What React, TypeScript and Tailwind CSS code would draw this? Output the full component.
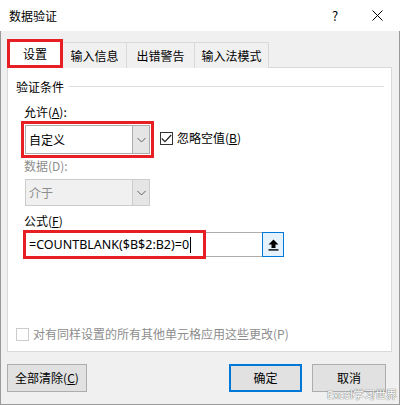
import React from "react";

const font = "font-['Microsoft_YaHei','Noto_Sans_CJK_SC',sans-serif]";

const Chevron: React.FC<{ color?: string }> = ({ color = "#606060" }) => (
  <svg width="9" height="6" viewBox="0 0 9 6" fill="none">
    <path d="M0.5 1 L4.5 5 L8.5 1" stroke={color} strokeWidth="1" />
  </svg>
);

const App: React.FC = () => {
  const tabs = ["输入信息", "出错警告", "输入法模式"];
  const tabWidths = ["w-[65px]", "w-[69px]", "w-[75px]"];

  return (
    <div className={`w-[400px] h-[405px] bg-white text-[12px] leading-4 text-[#000] ${font}`}>
      {/* Title bar */}
      <div className="h-[31px] flex items-center pl-[9px] bg-white">
        <span className="text-[12px]">数据验证</span>
        <span className="ml-auto w-[20px] text-center text-[13px] mr-[27px]">?</span>
        <svg width="11" height="11" viewBox="0 0 11 11" className="mr-[17px]">
          <path d="M0.5 0.5 L10.5 10.5 M10.5 0.5 L0.5 10.5" stroke="#000" strokeWidth="1" />
        </svg>
      </div>

      {/* Body */}
      <div className="relative h-[374px] bg-[#f0f0f0] border-x border-b border-[#9a9a9a] px-[6px] pt-[9px]">
        {/* Tabs */}
        <div className="flex items-end h-[28px] relative z-10">
          <div className="relative w-[56px] h-[29px] bg-white flex items-center justify-center">
            <span>设置</span>
            <div className="absolute inset-0 border-[3px] border-[#e81e25]" />
          </div>
          {tabs.map((t, i) => (
            <div
              key={t}
              className={`${tabWidths[i]} h-[26px] border border-b-0 border-[#d9d9d9] -ml-px flex items-center justify-center bg-[#f0f0f0]`}
            >
              {t}
            </div>
          ))}
        </div>

        {/* Panel */}
        <div className="relative w-[385px] h-[285px] -mt-px bg-white border border-[#d9d9d9]">
          <div className="flex items-center pl-[8px] pt-[11px]">
            <span>验证条件</span>
            <div className="flex-1 h-px bg-[#dcdcdc] ml-[5px] mr-[7px] mt-[-2px]" />
          </div>

          <div className="pl-[16px] mt-[9px]">
            允许(<span className="underline">A</span>):
          </div>

          <div className="flex items-start pl-[17px] mt-[5px]">
            <div className="relative w-[125px] h-[29px] border border-[#acacac] bg-white flex">
              <span className="flex-1 pl-[3px] flex items-center text-[12px]">自定义</span>
              <div className="w-[17px] h-full bg-[#e5e5e5] border-l border-[#acacac] flex items-center justify-center">
                <Chevron />
              </div>
              <div className="absolute -left-[5px] -top-[5px] -right-[5px] -bottom-[5px] border-[3px] border-[#e81e25]" />
            </div>
            <div className="flex items-center ml-[10px] mt-[5px]">
              <div className="w-[13px] h-[13px] border border-[#333] bg-white flex items-center justify-center">
                <svg width="11" height="9" viewBox="0 0 11 9">
                  <path d="M0.8 4.5 L4 7.6 L10.2 1" stroke="#222" strokeWidth="1.2" fill="none" />
                </svg>
              </div>
              <span className="ml-[4px]">
                忽略空值(<span className="underline">B</span>)
              </span>
            </div>
          </div>

          <div className="pl-[16px] mt-[4px] text-[#8d8d8d]">数据(D):</div>

          <div className="ml-[17px] mt-[5px] w-[125px] h-[27px] border border-[#cccccc] bg-[#f0f0f0] flex">
            <span className="flex-1 pl-[3px] flex items-center text-[#8d8d8d]">介于</span>
            <div className="w-[17px] h-full bg-[#e5e5e5] border-l border-[#cccccc] flex items-center justify-center">
              <Chevron />
            </div>
          </div>

          <div className="pl-[16px] mt-[7px]">
            公式(<span className="underline">F</span>)
          </div>

          <div className="relative ml-[17px] mt-[3px] w-[259px] h-[25px] border border-[#acacac] bg-white flex">
            <div className="flex-1 flex items-center pl-[3px] text-[12.5px] font-['Noto_Sans',sans-serif]">
              =COUNTBLANK($B$2:B2)=0
              <span className="inline-block w-px h-[16px] bg-black ml-px" />
            </div>
            <div className="w-[22px] h-[25px] -mt-px -mr-px border border-[#0078d7] bg-[#e5f1fb] flex items-center justify-center">
              <svg width="11" height="12" viewBox="0 0 11 12">
                <path d="M5.5 0.5 L10.5 5.5 H7.5 V9 H3.5 V5.5 H0.5 Z" fill="#000" />
                <rect x="0.5" y="10.2" width="10" height="1.4" fill="#000" />
              </svg>
            </div>
            <div className="absolute -left-[3px] -top-[3px] -bottom-[3px] w-[183px] border-[3px] border-[#e81e25]" />
          </div>

          <div className="flex items-center pl-[8px] mt-[69px]">
            <div className="w-[13px] h-[13px] border border-[#cccccc] bg-white" />
            <span className="ml-[4px] text-[#8d8d8d]">对有同样设置的所有其他单元格应用这些更改(P)</span>
          </div>
        </div>

        {/* Buttons */}
        <div className="flex items-center mt-[12px]">
          <div className="w-[80px] h-[28px] border border-[#adadad] bg-[#e1e1e1] flex items-center justify-center">
            全部清除(<span className="underline">C</span>)
          </div>
          <div className="ml-auto w-[73px] h-[28px] border-2 border-[#0078d7] bg-[#e1e1e1] flex items-center justify-center">
            确定
          </div>
          <div className="ml-[10px] mr-[7px] w-[74px] h-[28px] border border-[#adadad] bg-[#e1e1e1] flex items-center justify-center">
            取消
          </div>
        </div>

        <div className="absolute right-[2px] bottom-[3px] text-[11px] leading-[14px] text-white [text-shadow:0_0_1px_#666,0_0_1px_#666]">
          Excel学习世界
        </div>
      </div>
    </div>
  );
};

export default App;
